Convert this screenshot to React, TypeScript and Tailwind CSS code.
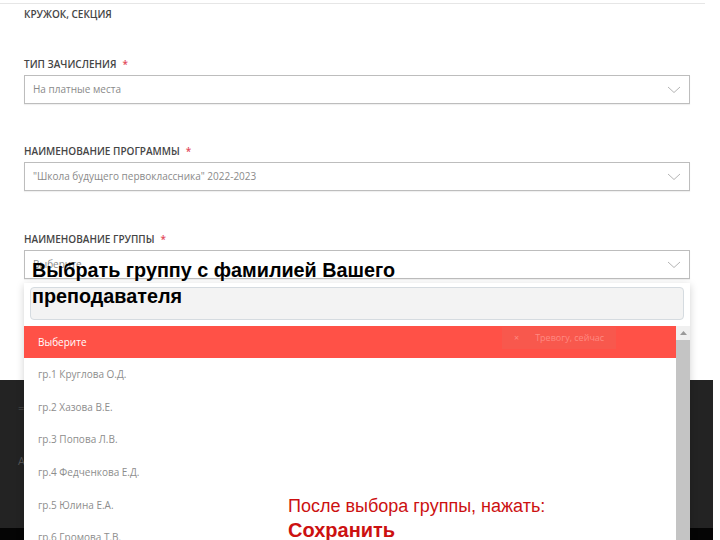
import React from 'react';

const Chevron: React.FC = () => (
  <svg width="14" height="8" viewBox="0 0 14 8" className="text-[#b5b5b5]">
    <path d="M1 1l6 5.5L13 1" fill="none" stroke="currentColor" strokeWidth="1" />
  </svg>
);

const Label: React.FC<{ text: string; required?: boolean }> = ({ text, required }) => (
  <div className="text-[10px] font-semibold uppercase text-[#454545] leading-none">
    {text}
    {required && <span className="ml-1.5 text-[#e2495a]">*</span>}
  </div>
);

const Select: React.FC<{ value: string }> = ({ value }) => (
  <div className="mt-[6px] flex h-[29px] items-center justify-between border border-[#bdbdbd] bg-white pl-2 pr-2 shadow-[0_1px_1px_rgba(0,0,0,0.06)]">
    <span className="text-[10px] text-[#8a8a8a]">{value}</span>
    <Chevron />
  </div>
);

const groups = [
  'гр.1 Круглова О.Д.',
  'гр.2 Хазова В.Е.',
  'гр.3 Попова Л.В.',
  'гр.4 Федченкова Е.Д.',
  'гр.5 Юлина Е.А.',
  'гр.6 Громова Т.В.',
];

export default function App() {
  return (
    <div className="relative flex h-[540px] w-[720px] overflow-hidden bg-white font-['Open_Sans',sans-serif]">
      <div className="flex w-[713px] flex-col">
        {/* form area */}
        <div className="h-[380px] bg-white pt-[3px]">
          <div className="mr-[8px] border-t border-[#e6e6e6]" />
          <div className="pl-6 pr-[23px] pt-[5px]">
            <Label text="Кружок, секция" />
            <div className="mt-[40px]">
              <Label text="Тип зачисления" required />
              <Select value="На платные места" />
            </div>
            <div className="mt-[42px]">
              <Label text="Наименование программы" required />
              <Select value={'"Школа будущего первоклассника" 2022-2023'} />
            </div>
            <div className="mt-[43px]">
              <Label text="Наименование группы" required />
              <Select value="Выберите" />
            </div>
          </div>
        </div>
        {/* dark footer */}
        <div className="flex flex-1 flex-col bg-[#232323]">
          <div className="flex-1 pl-[18px] pt-[20px] text-[11px] text-[#555]">
            <div>=</div>
            <div className="mt-[36px]">A</div>
          </div>
          <div className="h-[12px] bg-[#050505]" />
        </div>
      </div>
      <div className="flex-1 bg-white" />

      {/* dropdown */}
      <div className="absolute left-6 top-[283px] h-[270px] w-[666px] bg-white shadow-[0_2px_8px_rgba(0,0,0,0.18)]">
        <div className="px-[6px] pt-[4px]">
          <div className="h-[33px] rounded-sm border border-[#d5dbe0] bg-[#f3f3f3]" />
        </div>
        <div className="mt-[6px] flex">
          <div className="flex-1">
            <div className="relative flex h-[32px] items-center bg-[#ff5147] pl-[14px] text-[10px] text-white">
              Выберите
              <div className="absolute left-[478px] top-[1px] flex h-[22px] items-center gap-4 bg-[#f8584d] px-[12px] text-[9px] text-[#ff8a82]">
                <span>×</span>
                <span>Тревогу, сейчас</span>
              </div>
            </div>
            {groups.map((g) => (
              <div key={g} className="flex h-[32.7px] items-center pl-[14px] text-[10px] text-[#8d8d8d]">
                {g}
              </div>
            ))}
          </div>
          <div className="flex w-[14px] flex-col bg-[#c4c4c4]">
            <div className="flex h-[14px] items-center justify-center bg-[#f0f0f0]">
              <svg width="7" height="4" viewBox="0 0 7 4">
                <path d="M0 4L3.5 0 7 4z" fill="#9a9a9a" />
              </svg>
            </div>
          </div>
        </div>
      </div>

      {/* annotations */}
      <div className="absolute left-[32px] top-[257px] w-[400px] font-['Liberation_Sans',sans-serif] text-[19.8px] font-bold leading-[26px] text-black">
        Выбрать группу с фамилией Вашего преподавателя
      </div>
      <div className="absolute left-[288px] top-[494px] font-['Liberation_Sans',sans-serif] text-[18px] leading-[24px] text-[#cc1111]">
        <div>После выбора группы, нажать:</div>
        <div className="text-[20px] font-bold">Сохранить</div>
      </div>
    </div>
  );
}
